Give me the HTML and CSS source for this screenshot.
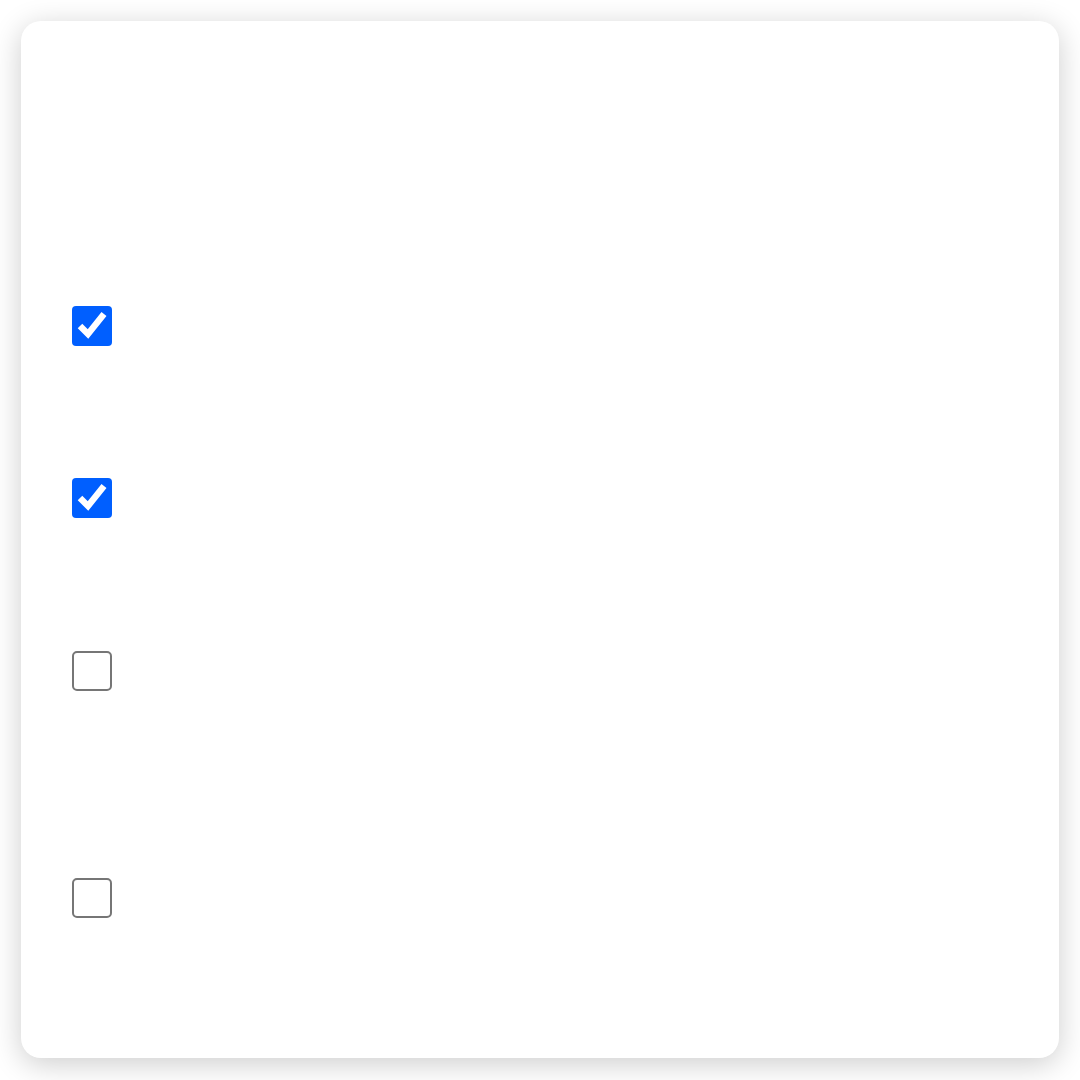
FILE: index.html
```html
<!DOCTYPE html>
<html lang="en">
<head>
<meta charset="utf-8">
<title>Options</title>
<link rel="stylesheet" href="styles.css">
</head>
<body>
  <main class="card">
    <ul class="options">
      <li class="option option-a"><span class="box"><input type="checkbox" class="check" checked aria-label="Option 1"></span></li>
      <li class="option option-b"><span class="box"><input type="checkbox" class="check" checked aria-label="Option 2"></span></li>
      <li class="option option-c"><span class="box"><input type="checkbox" class="check" aria-label="Option 3"></span></li>
      <li class="option option-d"><span class="box"><input type="checkbox" class="check" aria-label="Option 4"></span></li>
    </ul>
  </main>
</body>
</html>
```
FILE: styles.css
```css
html, body {
  margin: 0;
  padding: 0;
  background: #ffffff;
  font-family: "Liberation Sans", Arial, sans-serif;
}

body {
  padding: 21px;
  box-sizing: border-box;
  width: 1080px;
  height: 1080px;
}

.card {
  width: 1038px;
  height: 1037px;
  background: #ffffff;
  border-radius: 20px;
  box-shadow: 0 6px 30px rgba(0, 0, 0, 0.2);
  box-sizing: border-box;
  padding: 285px 0 0 51px;
}

.options {
  list-style: none;
  margin: 0;
  padding: 0;
  display: flex;
  flex-direction: column;
}

.option {
  display: flex;
  align-items: center;
  height: 39px;
}

.option-b { margin-top: 133px; }
.option-c { margin-top: 134px; }
.option-d { margin-top: 188px; }

/* native checkbox drawn at double size */
.box {
  display: block;
  width: 39px;
  height: 39px;
}

.check {
  display: block;
  margin: 0;
  width: 19.5px;
  height: 19.5px;
  transform: scale(2);
  transform-origin: 0 0;
  accent-color: #005fff;
}
```
